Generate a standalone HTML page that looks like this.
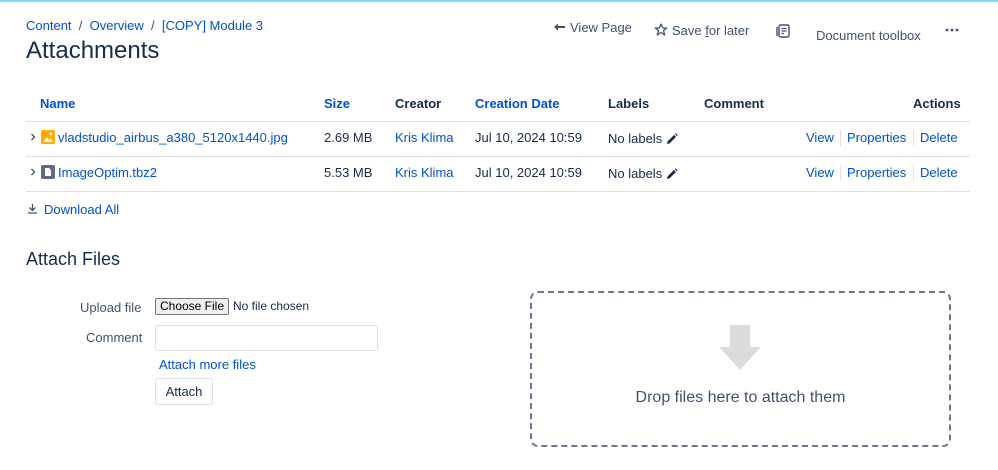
<!DOCTYPE html>
<html><head><meta charset="utf-8"><style>
*{margin:0;padding:0;box-sizing:border-box}
body{width:998px;height:470px;background:#fff;font-family:"Liberation Sans",sans-serif;color:#172b4d;position:relative;overflow:hidden;font-size:13px}
.a{position:absolute;white-space:nowrap}
.l{color:#0052cc}
.g{color:#42526e}
.b{font-weight:bold}
.hr{position:absolute;left:26px;width:944px;height:1px;background:#dfe1e6}
.sep{position:absolute;width:1px;height:16px;background:#dfe1e6}
</style></head><body>
<div class="a" style="left:0;top:0;width:998px;height:2px;background:#79e2f2"></div>
<div class="a l" style="left:26px;top:18px;font-size:13px">Content <span style="color:#42526e">&nbsp;/&nbsp;</span> Overview <span style="color:#42526e">&nbsp;/&nbsp;</span> [COPY] Module 3</div>
<div class="a" style="left:26px;top:37px;font-size:24px">Attachments</div>

<svg class="a" style="left:553px;top:22px" width="13" height="10" viewBox="0 0 13 10"><path d="M1 5L5 1.5V4H12V6H5V8.5Z" fill="#42526e"/></svg>
<div class="a g" style="left:570px;top:20px;font-size:13px">View Page</div>
<svg class="a" style="left:654px;top:23px" width="14" height="14" viewBox="0 0 14 14"><path d="M7 1.2L8.7 5H12.8L9.5 7.6L10.7 12L7 9.5L3.3 12L4.5 7.6L1.2 5H5.3Z" fill="none" stroke="#42526e" stroke-width="1.3" stroke-linejoin="round"/></svg>
<div class="a g" style="left:672px;top:23px;font-size:13px">Save <u>f</u>or later</div>
<svg class="a" style="left:776px;top:24px" width="14" height="14" viewBox="0 0 14 14"><rect x="3" y="1" width="10" height="12" rx="1.5" fill="none" stroke="#42526e" stroke-width="1.4"/><path d="M1 3V12" stroke="#42526e" stroke-width="1.4"/><path d="M5.5 4.5H10.5M5.5 7H10.5M5.5 9.5H8" stroke="#42526e" stroke-width="1.2"/></svg>
<div class="a g" style="left:816px;top:28px;font-size:13px">Document toolbox</div>
<svg class="a" style="left:945px;top:28px" width="14" height="4" viewBox="0 0 14 4"><circle cx="2" cy="2" r="1.4" fill="#42526e"/><circle cx="7" cy="2" r="1.4" fill="#42526e"/><circle cx="12" cy="2" r="1.4" fill="#42526e"/></svg>

<div class="a l b" style="left:40px;top:96px">Name</div>
<div class="a l b" style="left:324px;top:96px">Size</div>
<div class="a b" style="left:395px;top:96px">Creator</div>
<div class="a l b" style="left:475px;top:96px">Creation Date</div>
<div class="a b" style="left:608px;top:96px">Labels</div>
<div class="a b" style="left:704px;top:96px">Comment</div>
<div class="a b" style="left:913px;top:96px">Actions</div>
<div class="hr" style="top:121px"></div>
<div class="hr" style="top:156px"></div>
<div class="hr" style="top:191px"></div>

<svg class="a" style="left:30px;top:133px" width="6" height="8" viewBox="0 0 6 8"><path d="M1.5 1L4.5 4L1.5 7" stroke="#42526e" stroke-width="1.3" fill="none"/></svg>
<svg class="a" style="left:41px;top:130px" width="14" height="14" viewBox="0 0 14 14"><rect width="14" height="14" rx="2" fill="#ffab00"/><path d="M2 12L6 7.5L8.5 10L10 8.5L12 12Z" fill="#fff"/><circle cx="10" cy="4" r="1.4" fill="#fff"/></svg>
<div class="a l" style="left:58px;top:130px">vladstudio_airbus_a380_5120x1440.jpg</div>
<div class="a" style="left:324px;top:130px">2.69 MB</div>
<div class="a l" style="left:395px;top:130px">Kris Klima</div>
<div class="a" style="left:475px;top:130px">Jul 10, 2024 10:59</div>
<div class="a" style="left:608px;top:131px">No labels</div>
<svg class="a" style="left:666px;top:133px" width="12" height="12" viewBox="0 0 12 12"><path d="M1 11L1.6 8.4L8 2L10 4L3.6 10.4Z M8.8 1.2L9.6 0.4L11.6 2.4L10.8 3.2Z" fill="#172b4d"/></svg>
<div class="a l" style="left:806px;top:130px">View</div><div class="sep" style="left:840px;top:130px"></div>
<div class="a l" style="left:847px;top:130px">Properties</div><div class="sep" style="left:913px;top:130px"></div>
<div class="a l" style="left:920px;top:130px">Delete</div>

<svg class="a" style="left:30px;top:168px" width="6" height="8" viewBox="0 0 6 8"><path d="M1.5 1L4.5 4L1.5 7" stroke="#42526e" stroke-width="1.3" fill="none"/></svg>
<svg class="a" style="left:41px;top:165px" width="14" height="14" viewBox="0 0 14 14"><rect width="14" height="14" rx="2" fill="#5e6c84"/><path d="M4 3H8L10 5V11H4Z" fill="#fff"/></svg>
<div class="a l" style="left:58px;top:165px">ImageOptim.tbz2</div>
<div class="a" style="left:324px;top:165px">5.53 MB</div>
<div class="a l" style="left:395px;top:165px">Kris Klima</div>
<div class="a" style="left:475px;top:165px">Jul 10, 2024 10:59</div>
<div class="a" style="left:608px;top:166px">No labels</div>
<svg class="a" style="left:666px;top:168px" width="12" height="12" viewBox="0 0 12 12"><path d="M1 11L1.6 8.4L8 2L10 4L3.6 10.4Z M8.8 1.2L9.6 0.4L11.6 2.4L10.8 3.2Z" fill="#172b4d"/></svg>
<div class="a l" style="left:806px;top:165px">View</div><div class="sep" style="left:840px;top:165px"></div>
<div class="a l" style="left:847px;top:165px">Properties</div><div class="sep" style="left:913px;top:165px"></div>
<div class="a l" style="left:920px;top:165px">Delete</div>

<svg class="a" style="left:27px;top:203px" width="11" height="11" viewBox="0 0 11 11"><path d="M5.5 1V7M2.5 4.5L5.5 7.5L8.5 4.5M1 10H10" stroke="#42526e" stroke-width="1.3" fill="none"/></svg>
<div class="a l" style="left:44px;top:202px">Download All</div>

<div class="a" style="left:26px;top:249px;font-size:18px">Attach Files</div>
<div class="a g" style="left:80px;top:300px">Upload file</div>
<div class="a" style="left:155px;top:298px;width:74px;height:17px;border:1px solid #767676;background:#efefef;border-radius:2px;font-size:12px;color:#000;text-align:center;line-height:15px">Choose File</div>
<div class="a" style="left:233px;top:299px;font-size:12px;color:#172b4d">No file chosen</div>
<div class="a g" style="left:86px;top:330px">Comment</div>
<div class="a" style="left:155px;top:325px;width:223px;height:26px;border:1px solid #dfe1e6;border-radius:3px"></div>
<div class="a l" style="left:159px;top:357px">Attach more files</div>
<div class="a" style="left:155px;top:378px;width:58px;height:27px;border:1px solid #dfe1e6;border-radius:3px;text-align:center;line-height:25px">Attach</div>

<div class="a" style="left:530px;top:291px;width:421px;height:156px;border:2px dashed #6b778c;border-radius:8px"></div>
<svg class="a" style="left:718px;top:324px" width="44" height="46" viewBox="0 0 44 46"><path d="M12 1H32V23H43L22 46L1 23H12Z" fill="#dcdcdc"/></svg>
<div class="a g" style="left:530px;top:389px;width:421px;text-align:center;font-size:16px">Drop files here to attach them</div>
</body></html>
